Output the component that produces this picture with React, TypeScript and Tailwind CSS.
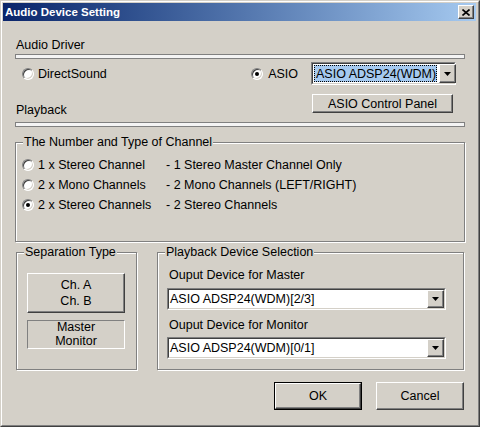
import React from 'react';

const raised =
  'bg-[#d4d0c8] border border-t-white border-l-white border-r-[#404040] border-b-[#404040] shadow-[inset_-1px_-1px_0_#808080]';

function Radio({ checked }: { checked?: boolean }) {
  return (
    <span className="inline-flex shrink-0 w-[12px] h-[12px] items-center justify-center rounded-full bg-white border border-t-[#808080] border-l-[#808080] border-r-white border-b-white shadow-[inset_1px_1px_0_#404040,inset_-1px_-1px_0_#d4d0c8]">
      {checked && <span className="w-[4px] h-[4px] rounded-full bg-black" />}
    </span>
  );
}

function ArrowButton() {
  return (
    <div className={`w-[17px] h-full shrink-0 flex items-center justify-center ${raised}`}>
      <svg width="7" height="4" viewBox="0 0 7 4">
        <path d="M0 0h7L3.5 4z" fill="#000" />
      </svg>
    </div>
  );
}

function Combo({ text, focused, className }: { text: string; focused?: boolean; className: string }) {
  return (
    <div className={`flex border border-t-[#808080] border-l-[#808080] border-r-white border-b-white ${className}`}>
      <div className="flex-1 flex min-w-0 bg-white border border-t-[#404040] border-l-[#404040] border-r-[#d4d0c8] border-b-[#d4d0c8]">
        {focused ? (
          <div className="flex-1 flex items-center my-[1px] ml-[1px] mr-[2px] pl-[1px] bg-[#a6caf0] border border-dotted border-black whitespace-nowrap">
            {text}
          </div>
        ) : (
          <div className="flex-1 flex items-center pl-[1px] whitespace-nowrap">{text}</div>
        )}
        <ArrowButton />
      </div>
    </div>
  );
}

function Group({ title, className, children }: { title: string; className: string; children: React.ReactNode }) {
  return (
    <div className={`relative border border-[#808080] shadow-[inset_1px_1px_0_#fff,1px_1px_0_#fff] ${className}`}>
      <span className="absolute -top-[9px] left-[7px] bg-[#d4d0c8] px-[1px] whitespace-nowrap">{title}</span>
      {children}
    </div>
  );
}

const channels = [
  { name: '1 x Stereo Channel', desc: '- 1 Stereo Master Channel Only' },
  { name: '2 x Mono Channels', desc: '- 2 Mono Channels (LEFT/RIGHT)' },
  { name: '2 x Stereo Channels', desc: '- 2 Stereo Channels', checked: true },
];

export default function App() {
  return (
    <div className="w-[480px] h-[427px] bg-[#d4d0c8] font-['Liberation_Sans',Arial,sans-serif] text-[12.5px] leading-[16px] text-black">
      <div className="h-full border border-t-[#d4d0c8] border-l-[#d4d0c8] border-r-[#404040] border-b-[#404040]">
        <div className="h-full flex flex-col border border-t-white border-l-white border-r-[#808080] border-b-[#808080] pl-[1px] pt-[1px] pr-[2px]">
          {/* title bar */}
          <div className="h-[18px] flex items-center bg-linear-to-r from-[#0a246a] to-[#a6caf0] pl-[2px] pr-[2px]">
            <span className="text-white font-bold text-[11.5px]">Audio Device Setting</span>
            <div className={`ml-auto w-[16px] h-[14px] flex items-center justify-center ${raised}`}>
              <svg width="8" height="7" viewBox="0 0 8 7">
                <path d="M0.5 0.5L7.5 6.5M7.5 0.5L0.5 6.5" stroke="#000" strokeWidth="1.6" />
              </svg>
            </div>
          </div>

          <div className="pl-[12px] pr-[11px]">
            <div className="pt-[16px] pl-[1px]">Audio Driver</div>
            <div className="mt-[1px] h-[5px] border border-[#808080] bg-[#f4f4f4]" />

            <div className="mt-[3px] h-[23px] flex items-center">
              <div className="pl-[7px] flex items-center gap-[4px]">
                <Radio />
                <span>DirectSound</span>
              </div>
              <div className="ml-auto mr-[9px] flex items-center">
                <Radio checked />
                <span className="ml-[5px]">ASIO</span>
                <Combo text="ASIO ADSP24(WDM)" focused className="ml-[13px] w-[145px] h-[23px]" />
              </div>
            </div>

            <div className="mt-[9px] h-[24px] flex justify-between">
              <div className="self-end pl-[1px]">Playback</div>
              <div className={`w-[141px] h-[19px] mr-[12px] flex items-center justify-center ${raised}`}>
                ASIO Control Panel
              </div>
            </div>
            <div className="mt-[4px] h-[5px] border border-[#808080] bg-[#f4f4f4]" />

            <Group title="The Number and Type of Channel" className="mt-[15px] h-[100px]">
              <div className="pt-[12px] pl-[6px]">
                {channels.map((c) => (
                  <div key={c.name} className="h-[20px] flex items-center">
                    <Radio checked={c.checked} />
                    <span className="ml-[4px] w-[128px]">{c.name}</span>
                    <span>{c.desc}</span>
                  </div>
                ))}
              </div>
            </Group>

            <div className="mt-[10px] h-[118px] flex">
              <Group title="Separation Type" className="ml-[1px] w-[121px] h-full">
                <div className="pt-[20px] pl-[10px]">
                  <div className={`w-[98px] h-[40px] flex flex-col items-center justify-center ${raised}`}>
                    <span>Ch. A</span>
                    <span>Ch. B</span>
                  </div>
                  <div className="mt-[7px] w-[98px] h-[29px] flex flex-col items-center justify-center border border-t-[#808080] border-l-[#808080] border-r-white border-b-white">
                    <span className="leading-[13px]">Master</span>
                    <span className="leading-[14px]">Monitor</span>
                  </div>
                </div>
              </Group>

              <Group title="Playback Device Selection" className="ml-[20px] w-[307px] h-full">
                <div className="pt-[14px] pl-[9px]">
                  <div className="pl-[2px]">Ouput Device for Master</div>
                  <Combo text="ASIO ADSP24(WDM)[2/3]" className="mt-[5px] w-[279px] h-[22px]" />
                  <div className="mt-[7px] pl-[2px]">Ouput Device for Monitor</div>
                  <Combo text="ASIO ADSP24(WDM)[0/1]" className="mt-[4px] w-[279px] h-[22px]" />
                </div>
              </Group>
            </div>

            <div className="mt-[12px] mr-[1px] flex justify-end gap-[14px]">
              <div className="w-[88px] h-[28px] border border-black">
                <div className={`w-full h-full flex items-center justify-center ${raised}`}>OK</div>
              </div>
              <div className={`w-[88px] h-[28px] flex items-center justify-center ${raised}`}>Cancel</div>
            </div>
          </div>
        </div>
      </div>
    </div>
  );
}
